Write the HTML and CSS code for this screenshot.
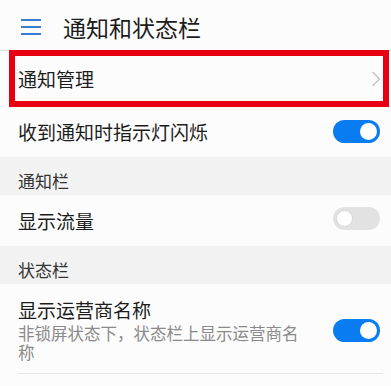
FILE: index.html
```html
<!DOCTYPE html>
<html lang="zh-CN">
<head>
<meta charset="utf-8">
<link rel="stylesheet" href="styles.css">
</head>
<body>
<div class="screen">
  <header class="topbar">
    <svg class="menu" width="20" height="16" viewBox="0 0 20 16">
      <rect x="0" y="0" width="20" height="2" fill="#3b7bd0"/>
      <rect x="0" y="7" width="20" height="2" fill="#3b7bd0"/>
      <rect x="0" y="14" width="20" height="2" fill="#3b7bd0"/>
    </svg>
    <h1 class="title">通知和状态栏</h1>
  </header>

  <div class="row row-link">
    <span class="label">通知管理</span>
    <svg class="chevron" width="10" height="16" viewBox="0 0 10 16">
      <polyline points="1.5,1 8.5,8 1.5,15" fill="none" stroke="#c4c4c4" stroke-width="1.4"/>
    </svg>
    <div class="highlight"></div>
  </div>

  <div class="row row-light">
    <span class="label">收到通知时指示灯闪烁</span>
    <span class="switch on"><span class="knob"></span></span>
  </div>

  <div class="section">通知栏</div>

  <div class="row row-traffic">
    <span class="label">显示流量</span>
    <span class="switch off"><span class="knob"></span></span>
  </div>

  <div class="section">状态栏</div>

  <div class="row row-carrier">
    <div class="text">
      <div class="label">显示运营商名称</div>
      <div class="sub">非锁屏状态下，状态栏上显示运营商名称</div>
    </div>
    <span class="switch on"><span class="knob"></span></span>
  </div>
</div>
</body>
</html>
```
FILE: styles.css
```css
html, body {
  margin: 0;
  padding: 0;
  background: #fcfcfc;
}
.screen {
  width: 391px;
  height: 386px;
  overflow: hidden;
  font-family: "Noto Sans CJK SC", "Noto Sans", sans-serif;
  color: #1c1c1c;
  background: #fcfcfc;
}
.topbar {
  height: 51px;
  display: flex;
  align-items: center;
  padding: 3px 0 0 21px;
  box-sizing: border-box;
  border-bottom: 1px solid #dcdcdc;
}
.menu {
  flex: none;
}
.title {
  margin: 0 0 0 22px;
  font-size: 23px;
  font-weight: 400;
  line-height: 30px;
  color: #1c1c1c;
}
.row {
  display: flex;
  align-items: center;
  padding: 0 11px 0 18px;
  background: #fcfcfc;
}
.label {
  font-size: 19px;
  line-height: 24px;
  flex: 1;
}
.row-link {
  position: relative;
  height: 56px;
}
.chevron {
  margin-right: -1px;
}
.highlight {
  position: absolute;
  left: 9px;
  right: 2px;
  top: -1px;
  bottom: 0;
  border: 6px solid #e60012;
}
.row-light {
  height: 50px;
}
.row-traffic {
  height: 51px;
}
.section {
  height: 38px;
  box-sizing: border-box;
  padding: 13px 0 0 18px;
  font-size: 17px;
  line-height: 22px;
  color: #333;
  background: #f2f2f2;
}
.switch {
  flex: none;
  width: 47px;
  height: 23px;
  border-radius: 12px;
  box-sizing: border-box;
  display: flex;
  align-items: center;
  padding: 0 3px;
}
.switch .knob {
  width: 17px;
  height: 17px;
  border-radius: 50%;
  background: #fff;
  box-sizing: border-box;
}
.switch.on {
  background: #0a7cf2;
  justify-content: flex-end;
}
.switch.off {
  background: #e2e2e2;
  justify-content: flex-start;
}
.switch.off .knob {
  border: 1px solid #d6d6d6;
}
.row-light .switch {
  margin-top: -2px;
}
.row-traffic .switch {
  margin-top: -4px;
}
.row-carrier {
  padding: 14px 3px 11px 0;
  margin: 0 8px 0 18px;
  border-bottom: 1px solid #e6e6e6;
}
.row-carrier .text {
  flex: 1;
  margin-right: 30px;
}
.row-carrier .label {
  display: block;
}
.sub {
  margin-top: 2px;
  font-size: 16.5px;
  line-height: 19px;
  color: #8a8a8a;
}
```
